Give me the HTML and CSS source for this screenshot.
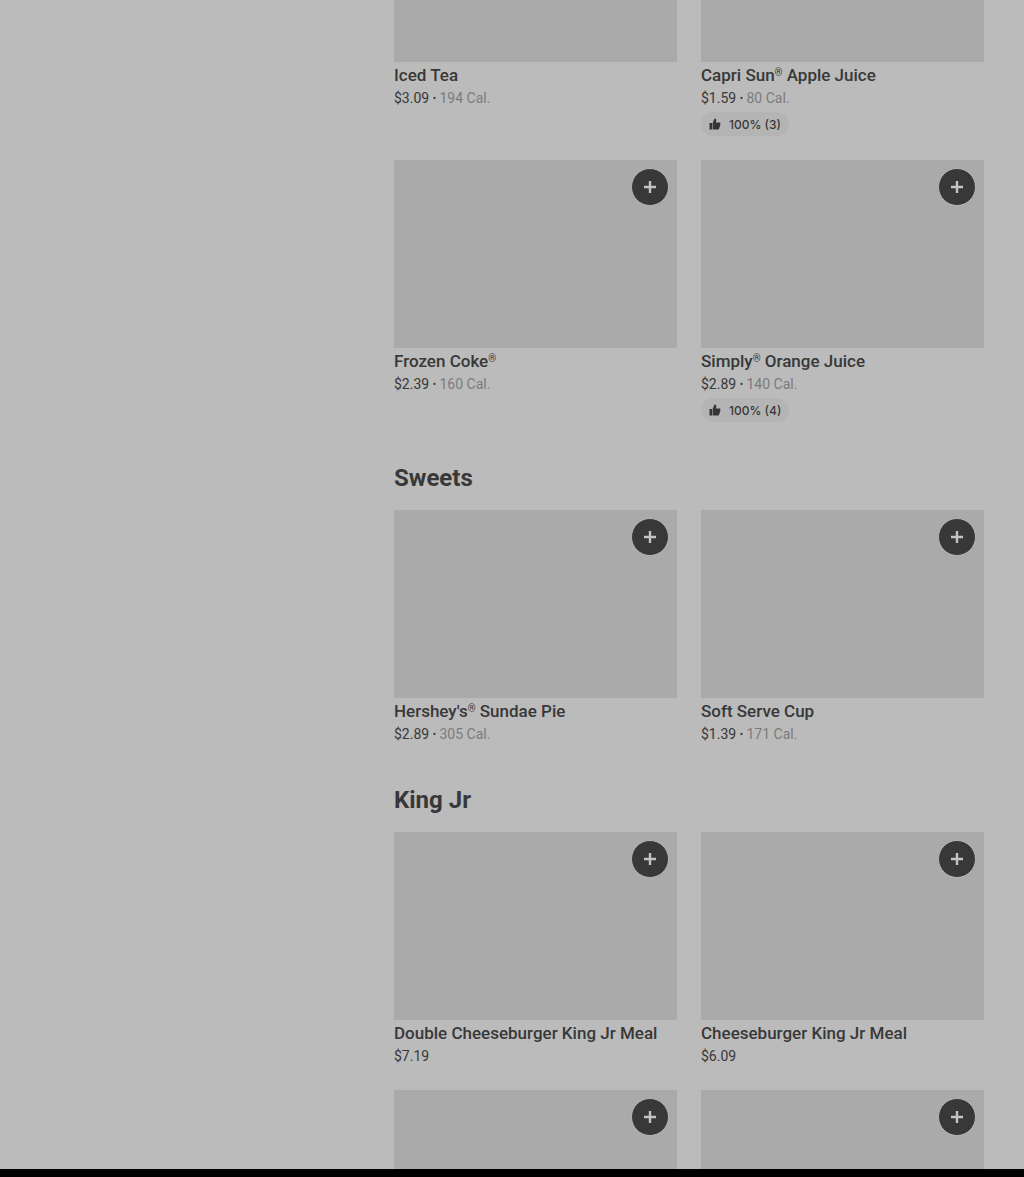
FILE: index.html
```
<!DOCTYPE html>
<html lang="en">
<head>
  <meta charset="UTF-8">
  <meta name="viewport" content="width=device-width, initial-scale=1.0">
  <title>Menu</title>
  <link rel="stylesheet" href="styles.css">
</head>
<body>
  <!-- Shared icons -->
  <svg class="icon-defs" aria-hidden="true">
    <symbol id="plus" viewBox="0 0 12 12">
      <path d="M4.800 0h2.400v4.800H12v2.400H7.200V12H4.800V7.200H0V4.800h4.800z"/>
    </symbol>
    <symbol id="thumb" viewBox="0 0 12 12">
      <path d="M0.500 5h2.500v6.500H0.500zM3.600 5l2-4.500c1.300 0 1.900 0.800 1.700 1.800L6.900 4.500h4.400v2.500l-1.500 4.500H3.600z"/>
    </symbol>
  </svg>

  <main class="menu">
    <!-- Drinks -->
    <section class="menu-section">
      <div class="items">
        <article class="item">
          <div class="photo photo-short"></div>
          <h3>Iced Tea</h3>
          <p class="price">$3.09 <span class="dot">•</span> <span class="calories">194 Cal.</span></p>
        </article>
        <article class="item">
          <div class="photo photo-short"></div>
          <h3>Capri Sun<span class="reg">®</span> Apple Juice</h3>
          <p class="price">$1.59 <span class="dot">•</span> <span class="calories">80 Cal.</span></p>
          <div class="rating"><svg><use href="#thumb"/></svg>100% (3)</div>
        </article>
        <article class="item">
          <div class="photo">
            <button class="add-button" aria-label="Add Frozen Coke"><svg><use href="#plus"/></svg></button>
          </div>
          <h3>Frozen Coke<span class="reg">®</span></h3>
          <p class="price">$2.39 <span class="dot">•</span> <span class="calories">160 Cal.</span></p>
        </article>
        <article class="item">
          <div class="photo">
            <button class="add-button" aria-label="Add Simply Orange Juice"><svg><use href="#plus"/></svg></button>
          </div>
          <h3>Simply<span class="reg">®</span> Orange Juice</h3>
          <p class="price">$2.89 <span class="dot">•</span> <span class="calories">140 Cal.</span></p>
          <div class="rating"><svg><use href="#thumb"/></svg>100% (4)</div>
        </article>
      </div>
    </section>

    <!-- Sweets -->
    <section class="menu-section">
      <h2>Sweets</h2>
      <div class="items">
        <article class="item">
          <div class="photo">
            <button class="add-button" aria-label="Add Hershey's Sundae Pie"><svg><use href="#plus"/></svg></button>
          </div>
          <h3>Hershey's<span class="reg">®</span> Sundae Pie</h3>
          <p class="price">$2.89 <span class="dot">•</span> <span class="calories">305 Cal.</span></p>
        </article>
        <article class="item">
          <div class="photo">
            <button class="add-button" aria-label="Add Soft Serve Cup"><svg><use href="#plus"/></svg></button>
          </div>
          <h3>Soft Serve Cup</h3>
          <p class="price">$1.39 <span class="dot">•</span> <span class="calories">171 Cal.</span></p>
        </article>
      </div>
    </section>

    <!-- King Jr -->
    <section class="menu-section">
      <h2>King Jr</h2>
      <div class="items">
        <article class="item">
          <div class="photo">
            <button class="add-button" aria-label="Add Double Cheeseburger King Jr Meal"><svg><use href="#plus"/></svg></button>
          </div>
          <h3>Double Cheeseburger King Jr Meal</h3>
          <p class="price">$7.19</p>
        </article>
        <article class="item">
          <div class="photo">
            <button class="add-button" aria-label="Add Cheeseburger King Jr Meal"><svg><use href="#plus"/></svg></button>
          </div>
          <h3>Cheeseburger King Jr Meal</h3>
          <p class="price">$6.09</p>
        </article>
        <article class="item">
          <div class="photo">
            <button class="add-button" aria-label="Add item"><svg><use href="#plus"/></svg></button>
          </div>
        </article>
        <article class="item">
          <div class="photo">
            <button class="add-button" aria-label="Add item"><svg><use href="#plus"/></svg></button>
          </div>
        </article>
      </div>
    </section>
  </main>
  <footer class="bottom-bar"></footer>
</body>
</html>
```
FILE: styles.css
```
* {
  margin: 0;
  padding: 0;
  box-sizing: border-box;
}

body {
  display: flex;
  flex-direction: column;
  height: 100vh;
  overflow: hidden;
  background: #bbb;
  color: #383838;
  font-family: Roboto, Inter, sans-serif;
}

.icon-defs {
  display: none;
}

.menu {
  flex: 1;
  min-height: 0;
  overflow: hidden;
  padding-left: 394px;
  padding-right: 40px;
}

.menu-section {
  margin-bottom: 40px;
}

.menu-section h2 {
  margin-bottom: 16px;
  font-size: 24px;
  line-height: 32px;
  font-weight: 700;
}

.items {
  display: grid;
  grid-template-columns: 1fr 1fr;
  gap: 24px;
}

/* Item photo with the add button on top */
.photo {
  position: relative;
  aspect-ratio: 283 / 188;
  margin-bottom: 2px;
  background: #aaa;
}

.photo-short {
  aspect-ratio: auto;
  height: 62px;
}

.add-button {
  position: absolute;
  top: 8px;
  right: 8px;
  display: flex;
  align-items: center;
  justify-content: center;
  width: 38px;
  height: 38px;
  border: 1px solid #b4b4b4;
  border-radius: 50%;
  background: #383838;
  cursor: pointer;
}

.add-button svg {
  width: 12px;
  height: 12px;
  fill: #c4c4c4;
}

.item h3 {
  margin-bottom: 2px;
  font-size: 17px;
  line-height: 22px;
  font-weight: 500;
}

.reg {
  font-size: 10px;
  line-height: 10px;
  vertical-align: 5px;
}

.price {
  font-size: 14px;
  line-height: 20px;
}

.dot {
  font-size: 10px;
  line-height: 8px;
  vertical-align: 1px;
}

.calories {
  color: #7b7b7b;
}

/* Rating pill */
.rating {
  display: flex;
  align-items: center;
  gap: 8px;
  width: fit-content;
  height: 24px;
  margin-top: 4px;
  padding: 0 8px;
  border-radius: 12px;
  background: #b4b4b4;
  font-family: Inter, sans-serif;
  font-size: 12px;
  font-weight: 500;
}

.rating svg {
  width: 12px;
  height: 12px;
  fill: #353535;
}

.bottom-bar {
  height: 8px;
  background: #000;
}
```
